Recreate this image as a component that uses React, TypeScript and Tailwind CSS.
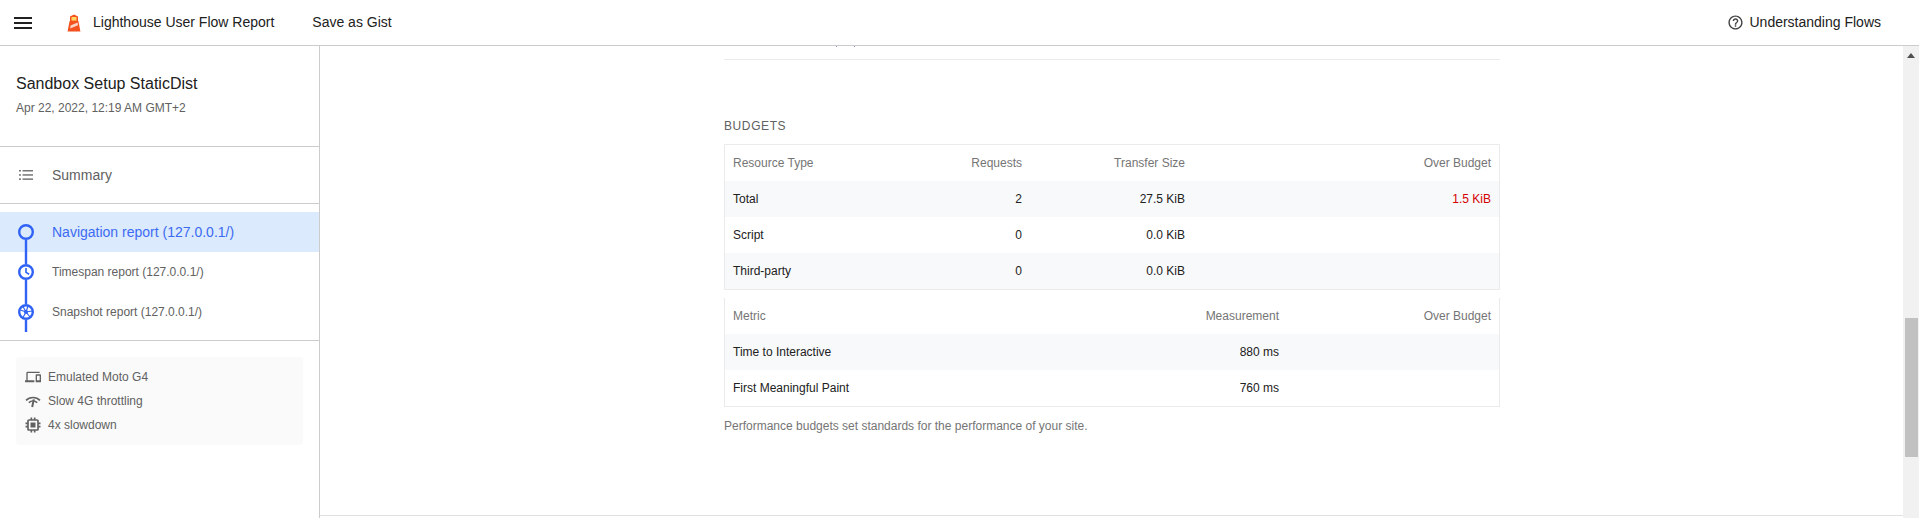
import { FC, ReactNode } from 'react';

const BLUE = '#2f62f5';

const Hamburger: FC = () => (
  <div className="flex flex-col gap-[3px] w-[18px]">
    <div className="h-[2px] bg-[#212121]"></div>
    <div className="h-[2px] bg-[#212121]"></div>
    <div className="h-[2px] bg-[#212121]"></div>
  </div>
);

const Logo: FC = () => (
  <svg width="14" height="18" viewBox="0 0 14 18">
    <path d="M0.6 17.5 L2.6 7 H11.4 L13.4 17.5 Z" fill="#f4511e" />
    <path d="M7 0.5 L3 2.6 V7 H11 V2.6 Z" fill="#f4511e" />
    <rect x="4.5" y="3" width="5" height="3.6" fill="#fdd663" />
    <path d="M3.6 11.6 L10.6 8.6 L11 11.2 L3.2 14.4 Z" fill="#fbd5c8" />
  </svg>
);

const HelpIcon: FC = () => (
  <svg width="17" height="17" viewBox="0 0 24 24" fill="#424242">
    <path d="M11 18h2v-2h-2v2zm1-16C6.48 2 2 6.48 2 12s4.48 10 10 10 10-4.48 10-10S17.52 2 12 2zm0 18c-4.41 0-8-3.59-8-8s3.59-8 8-8 8 3.59 8 8-3.59 8-8 8zm0-14c-2.21 0-4 1.79-4 4h2c0-1.1.9-2 2-2s2 .9 2 2c0 2-3 1.75-3 5h2c0-2.25 3-2.5 3-5 0-2.21-1.79-4-4-4z" />
  </svg>
);

const ListIcon: FC = () => (
  <svg width="14" height="12" viewBox="0 0 14 12" fill="#757575">
    <rect x="0" y="1" width="2" height="1.5" />
    <rect x="3.5" y="1" width="10.5" height="1.5" />
    <rect x="0" y="5.2" width="2" height="1.5" />
    <rect x="3.5" y="5.2" width="10.5" height="1.5" />
    <rect x="0" y="9.4" width="2" height="1.5" />
    <rect x="3.5" y="9.4" width="10.5" height="1.5" />
  </svg>
);

const DeviceIcon: FC = () => (
  <svg width="16" height="16" viewBox="0 0 24 24" fill="#616161">
    <path d="M4 6h18V4H4c-1.1 0-2 .9-2 2v11H0v3h14v-3H4V6zm19 2h-6c-.55 0-1 .45-1 1v10c0 .55.45 1 1 1h6c.55 0 1-.45 1-1V9c0-.55-.45-1-1-1zm-1 9h-4v-7h4v7z" />
  </svg>
);

const NetworkIcon: FC = () => (
  <svg width="16" height="16" viewBox="0 0 16 16" fill="none" stroke="#616161" strokeWidth="1.6">
    <path d="M1 7.4 C4.8 3.6 11.2 3.6 15 7.4" />
    <path d="M3.8 9.6 C6.2 7.4 9.8 7.4 12.2 9.6" />
    <path d="M8.8 6.4 L7.2 14" strokeWidth="2" />
  </svg>
);

const CpuIcon: FC = () => (
  <svg width="20" height="20" viewBox="0 0 24 24" fill="#616161" className="-mx-[2px]">
    <path d="M15 9H9v6h6V9zm6 2V9h-2V7c0-1.1-.9-2-2-2h-2V3h-2v2h-2V3H9v2H7c-1.1 0-2 .9-2 2v2H3v2h2v2H3v2h2v2c0 1.1.9 2 2 2h2v2h2v-2h2v2h2v-2h2c1.1 0 2-.9 2-2v-2h2v-2h-2v-2h2zm-4 6H7V7h10v10z" />
  </svg>
);

const Timeline: FC<{ top?: boolean; children?: ReactNode }> = ({ top = true, children }) => (
  <svg width="24" height="40" viewBox="0 0 24 40" fill="none" stroke={BLUE} strokeWidth="2.4">
    {top && <line x1="12" y1="0" x2="12" y2="12" />}
    <line x1="12" y1="28" x2="12" y2="40" />
    <circle cx="12" cy="20" r="6.8" />
    {children}
  </svg>
);

const Header: FC = () => (
  <header className="h-[46px] shrink-0 flex items-center border-b border-b-[#cccccc] bg-white text-[14px] text-[#212121]">
    <div className="ml-[14px]">
      <Hamburger />
    </div>
    <div className="ml-[35px]">
      <Logo />
    </div>
    <span className="ml-[12px]">Lighthouse User Flow Report</span>
    <span className="ml-[38px]">Save as Gist</span>
    <div className="ml-auto mr-[38px] flex items-center gap-[5px]">
      <HelpIcon />
      <span>Understanding Flows</span>
    </div>
  </header>
);

const InfoRow: FC<{ icon: ReactNode; label: string }> = ({ icon, label }) => (
  <div className="h-[24px] flex items-center gap-[7px]">
    {icon}
    <span>{label}</span>
  </div>
);

const Sidebar: FC = () => (
  <aside className="w-[320px] shrink-0 border-r border-r-[#cccccc] flex flex-col">
    <div className="h-[101px] shrink-0 border-b border-b-[#cccccc] pl-[16px] pt-[27px]">
      <div className="text-[16px] leading-[22px] text-[#212121]">Sandbox Setup StaticDist</div>
      <div className="mt-[4px] text-[12px] leading-[18px] text-[#616161]">Apr 22, 2022, 12:19 AM GMT+2</div>
    </div>
    <div className="h-[57px] shrink-0 border-b border-b-[#cccccc] flex items-center pl-[19px] gap-[19px] text-[14px] text-[#616161]">
      <ListIcon />
      <span>Summary</span>
    </div>
    <div className="pt-[8px] border-b border-b-[#cccccc] pb-[8px] shrink-0">
      <div className="h-[40px] pl-[14px] flex items-center gap-[14px] bg-[#dbeafd] text-[14px] text-[#3d6af2]">
        <Timeline top={false} />
        <span>Navigation report (127.0.0.1/)</span>
      </div>
      <div className="h-[40px] pl-[14px] flex items-center gap-[14px] text-[12px] text-[#616161]">
        <Timeline>
          <path d="M12 16 V20.4 L15.2 22.2" strokeWidth="1.6" />
        </Timeline>
        <span>Timespan report (127.0.0.1/)</span>
      </div>
      <div className="h-[40px] pl-[14px] flex items-center gap-[14px] text-[12px] text-[#616161]">
        <Timeline>
          <circle cx="12" cy="20" r="2" fill={BLUE} stroke="none" />
          <path d="M12 20 L14 14 M12 20 L18 19 M12 20 L16 25 M12 20 L9 25.5 M12 20 L6.5 18 M12 20 L9 14.5" strokeWidth="1.2" />
        </Timeline>
        <span>Snapshot report (127.0.0.1/)</span>
      </div>
    </div>
    <div className="mx-[16px] mt-[16px] h-[88px] rounded-[3px] bg-[#fafafa] pl-[9px] py-[8px] text-[12px] text-[#616161]">
      <InfoRow icon={<DeviceIcon />} label="Emulated Moto G4" />
      <InfoRow icon={<NetworkIcon />} label="Slow 4G throttling" />
      <InfoRow icon={<CpuIcon />} label="4x slowdown" />
    </div>
  </aside>
);

const ResourceRow: FC<{ name: string; requests: string; size: string; over?: string; shaded?: boolean }> = ({
  name,
  requests,
  size,
  over,
  shaded,
}) => (
  <div className={`h-[36px] grid grid-cols-[1fr_120px_163px_306px] items-center px-[8px] text-[#212121] ${shaded ? 'bg-[#f8f9fa]' : ''}`}>
    <span>{name}</span>
    <span className="text-right">{requests}</span>
    <span className="text-right">{size}</span>
    <span className="text-right text-[#d50000]">{over}</span>
  </div>
);

const MetricRow: FC<{ name: string; value: string; shaded?: boolean }> = ({ name, value, shaded }) => (
  <div className={`h-[36px] grid grid-cols-[1fr_210px_212px] items-center px-[8px] text-[#212121] ${shaded ? 'bg-[#f8f9fa]' : ''}`}>
    <span>{name}</span>
    <span className="text-right">{value}</span>
    <span></span>
  </div>
);

const Budgets: FC = () => (
  <div className="w-[776px] ml-[404px] text-[12px]">
    <div className="flex gap-[17px] h-px pl-[112px]">
      <div className="w-px h-px bg-[#8aa0b8]"></div>
      <div className="w-px h-px bg-[#8aa0b8]"></div>
    </div>
    <div className="mt-[12px] border-b border-b-[#ebebeb]"></div>
    <h2 className="mt-[59px] text-[12px] leading-[14px] tracking-[0.6px] text-[#616161]">BUDGETS</h2>
    <div className="mt-[11px] border border-[#ebebeb]">
      <div className="h-[36px] grid grid-cols-[1fr_120px_163px_306px] items-center px-[8px] text-[#757575]">
        <span>Resource Type</span>
        <span className="text-right">Requests</span>
        <span className="text-right">Transfer Size</span>
        <span className="text-right">Over Budget</span>
      </div>
      <ResourceRow name="Total" requests="2" size="27.5 KiB" over="1.5 KiB" shaded />
      <ResourceRow name="Script" requests="0" size="0.0 KiB" />
      <ResourceRow name="Third-party" requests="0" size="0.0 KiB" shaded />
    </div>
    <div className="mt-[8px] border-x border-b border-[#ebebeb]">
      <div className="h-[36px] grid grid-cols-[1fr_210px_212px] items-center px-[8px] text-[#757575]">
        <span>Metric</span>
        <span className="text-right">Measurement</span>
        <span className="text-right">Over Budget</span>
      </div>
      <MetricRow name="Time to Interactive" value="880 ms" shaded />
      <MetricRow name="First Meaningful Paint" value="760 ms" />
    </div>
    <p className="mt-[11px] leading-[16px] text-[#757575]">Performance budgets set standards for the performance of your site.</p>
  </div>
);

const Scrollbar: FC = () => (
  <div className="w-[16px] shrink-0 bg-[#f1f1f1] flex flex-col items-center">
    <div className="mt-[7px] w-0 h-0 border-x-[4px] border-x-transparent border-b-[5px] border-b-[#505050]"></div>
    <div className="mt-[260px] ml-[1px] w-[13px] h-[139px] bg-[#c1c1c1]"></div>
  </div>
);

const App: FC = () => (
  <div className="h-screen flex flex-col overflow-hidden bg-white font-['Liberation_Sans',sans-serif]">
    <Header />
    <div className="flex-1 min-h-0 flex">
      <Sidebar />
      <main className="flex-1 min-w-0 flex">
        <div className="flex-1 min-w-0 border-b border-b-[#e0e0e0] mb-[2px]">
          <Budgets />
        </div>
        <Scrollbar />
      </main>
    </div>
  </div>
);

export default App;
